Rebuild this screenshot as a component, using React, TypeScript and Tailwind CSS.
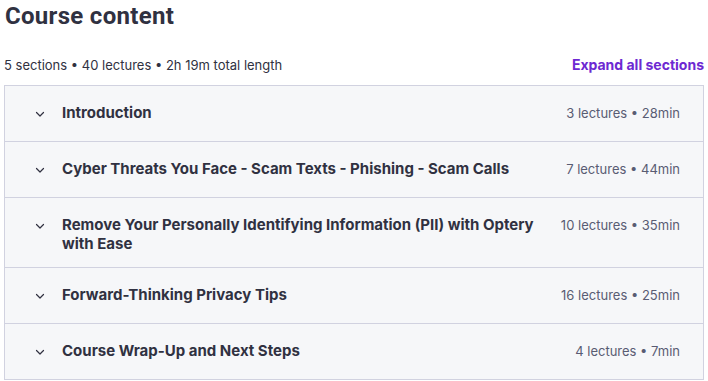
import React from 'react';

interface Section {
  title: string;
  lectures: number;
  length: string;
}

const sections: Section[] = [
  { title: 'Introduction', lectures: 3, length: '28min' },
  { title: 'Cyber Threats You Face - Scam Texts - Phishing - Scam Calls', lectures: 7, length: '44min' },
  { title: 'Remove Your Personally Identifying Information (PII) with Optery with Ease', lectures: 10, length: '35min' },
  { title: 'Forward-Thinking Privacy Tips', lectures: 16, length: '25min' },
  { title: 'Course Wrap-Up and Next Steps', lectures: 4, length: '7min' },
];

const Chevron: React.FC = () => (
  <svg viewBox="0 0 16 16" className="w-4 h-4 shrink-0 mt-[3px] text-[#303141]" fill="none">
    <path d="M4.5 6.5 L8 10 L11.5 6.5" stroke="currentColor" strokeWidth="1.2" strokeLinecap="round" strokeLinejoin="round" />
  </svg>
);

const App: React.FC = () => {
  return (
    <div className="w-[708px] h-[381px] bg-white px-[4px] text-[#303141] font-['Inter',sans-serif] overflow-hidden">
      <h2 className="font-['Roboto',sans-serif] text-[24px] leading-[32px] font-bold tracking-[0.3px] pl-[1px]">
        Course content
      </h2>
      <div className="flex items-end justify-between mt-[24px] mb-[11px]">
        <span className="text-[13px] leading-[18px] text-[#303141]">
          5 sections • 40 lectures • 2h 19m total length
        </span>
        <button type="button" className="text-[14px] leading-[18px] font-bold text-[#6d28d2]">
          Expand all sections
        </button>
      </div>
      <div className="border border-[#d1d2e0]">
        {sections.map((s, i) => (
          <div
            key={s.title}
            className={`flex items-start bg-[#f6f7f9] pl-[27px] pr-[23px] pt-[17px] pb-[14px] ${i > 0 ? 'border-t border-[#d1d2e0]' : ''}`}
          >
            <Chevron />
            <div className="flex-1 ml-[14px] mr-[18px] text-[15px] leading-[19px] font-bold min-h-[24px]">
              {s.title}
            </div>
            <span className="text-[13px] leading-[19px] text-[#595c73] pt-[1px] whitespace-nowrap">
              {s.lectures} lectures • {s.length}
            </span>
          </div>
        ))}
      </div>
    </div>
  );
};

export default App;
